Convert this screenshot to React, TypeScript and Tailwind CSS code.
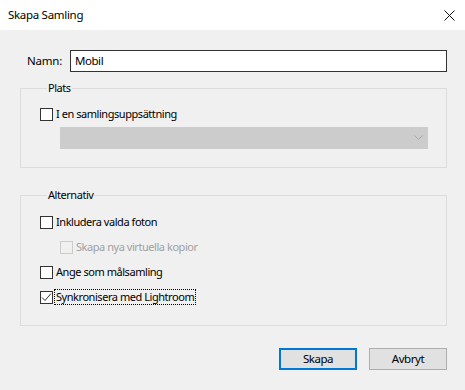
const font = "font-['Segoe_UI','Noto_Sans',sans-serif]";

function CheckBox({ checked = false, disabled = false }: { checked?: boolean; disabled?: boolean }) {
  return (
    <span
      className={`flex h-[13px] w-[13px] shrink-0 items-center justify-center border ${
        disabled ? "border-[#cccccc] bg-[#f0f0f0]" : "border-[#333333] bg-white"
      }`}
    >
      {checked && (
        <svg width="11" height="11" viewBox="0 0 11 11" fill="none">
          <path d="M1 5.5 L4 8.5 L10 1.5" stroke="#333333" strokeWidth="1" />
        </svg>
      )}
    </span>
  );
}

function Row({
  label,
  checked,
  disabled,
  focused,
  indent,
}: {
  label: string;
  checked?: boolean;
  disabled?: boolean;
  focused?: boolean;
  indent?: boolean;
}) {
  return (
    <div className={`flex h-[16px] items-center ${indent ? "pl-[20px]" : ""}`}>
      <CheckBox checked={checked} disabled={disabled} />
      <span
        className={`ml-[1px] px-[1px] leading-[14px] ${disabled ? "text-[#a0a0a0]" : "text-black"} ${
          focused ? "border border-dotted border-black" : "border border-transparent"
        }`}
      >
        {label}
      </span>
    </div>
  );
}

export default function App() {
  return (
    <div className={`h-[390px] w-[465px] bg-[#f0f0f0] text-[11px] tracking-[-0.45px] text-black ${font}`}>
      {/* titelrad */}
      <div className="flex h-[30px] items-center justify-between bg-white pl-[8px] pr-[10px]">
        <span className="text-[11.5px] tracking-[-0.3px]">Skapa Samling</span>
        <svg width="11" height="11" viewBox="0 0 11 11">
          <path d="M0.5 0.5 L10.5 10.5 M10.5 0.5 L0.5 10.5" stroke="#111111" strokeWidth="1" />
        </svg>
      </div>

      <div className="flex flex-col pl-[20px] pt-[20px]">
        <div className="flex h-[22px] items-center">
          <span className="w-[43px] pl-[7px] text-[11.5px] tracking-[-0.2px]">Namn:</span>
          <div className="ml-[7px] flex h-[22px] w-[377px] items-center border border-[#333333] bg-white pl-[4px] text-[11.5px]">
            Mobil
          </div>
        </div>

        <fieldset className="mt-[8px] w-[427px] border border-[#dcdcdc] pb-[18px] pl-[19px]">
          <legend className="ml-[7px] px-[1px] leading-[16px]">Plats</legend>
          <div className="mt-[10px]">
            <Row label="I en samlingsuppsättning" />
          </div>
          <div className="mt-[5px] ml-[20px] flex h-[22px] w-[368px] items-center justify-end bg-[#cccccc] pr-[5px]">
            <svg width="9" height="6" viewBox="0 0 9 6" fill="none">
              <path d="M0.5 0.5 L4.5 4.5 L8.5 0.5" stroke="#a8a8a8" strokeWidth="1" />
            </svg>
          </div>
        </fieldset>

        <fieldset className="mt-[19px] w-[427px] border border-[#dcdcdc] pb-[20px] pl-[19px]">
          <legend className="ml-[7px] px-[1px] leading-[16px]">Alternativ</legend>
          <div className="mt-[11px] flex flex-col gap-[9px]">
            <Row label="Inkludera valda foton" />
            <Row label="Skapa nya virtuella kopior" disabled indent />
            <Row label="Ange som målsamling" />
            <Row label="Synkronisera med Lightroom" checked focused />
          </div>
        </fieldset>

        <div className="mt-[22px] flex w-[427px] justify-end gap-[12px] text-[11.5px]">
          <button className="flex h-[22px] w-[78px] items-center justify-center border-2 border-[#0078d7] bg-[#e1e1e1]">
            Skapa
          </button>
          <button className="flex h-[22px] w-[78px] items-center justify-center border border-[#adadad] bg-[#e1e1e1]">
            Avbryt
          </button>
        </div>
      </div>
    </div>
  );
}
